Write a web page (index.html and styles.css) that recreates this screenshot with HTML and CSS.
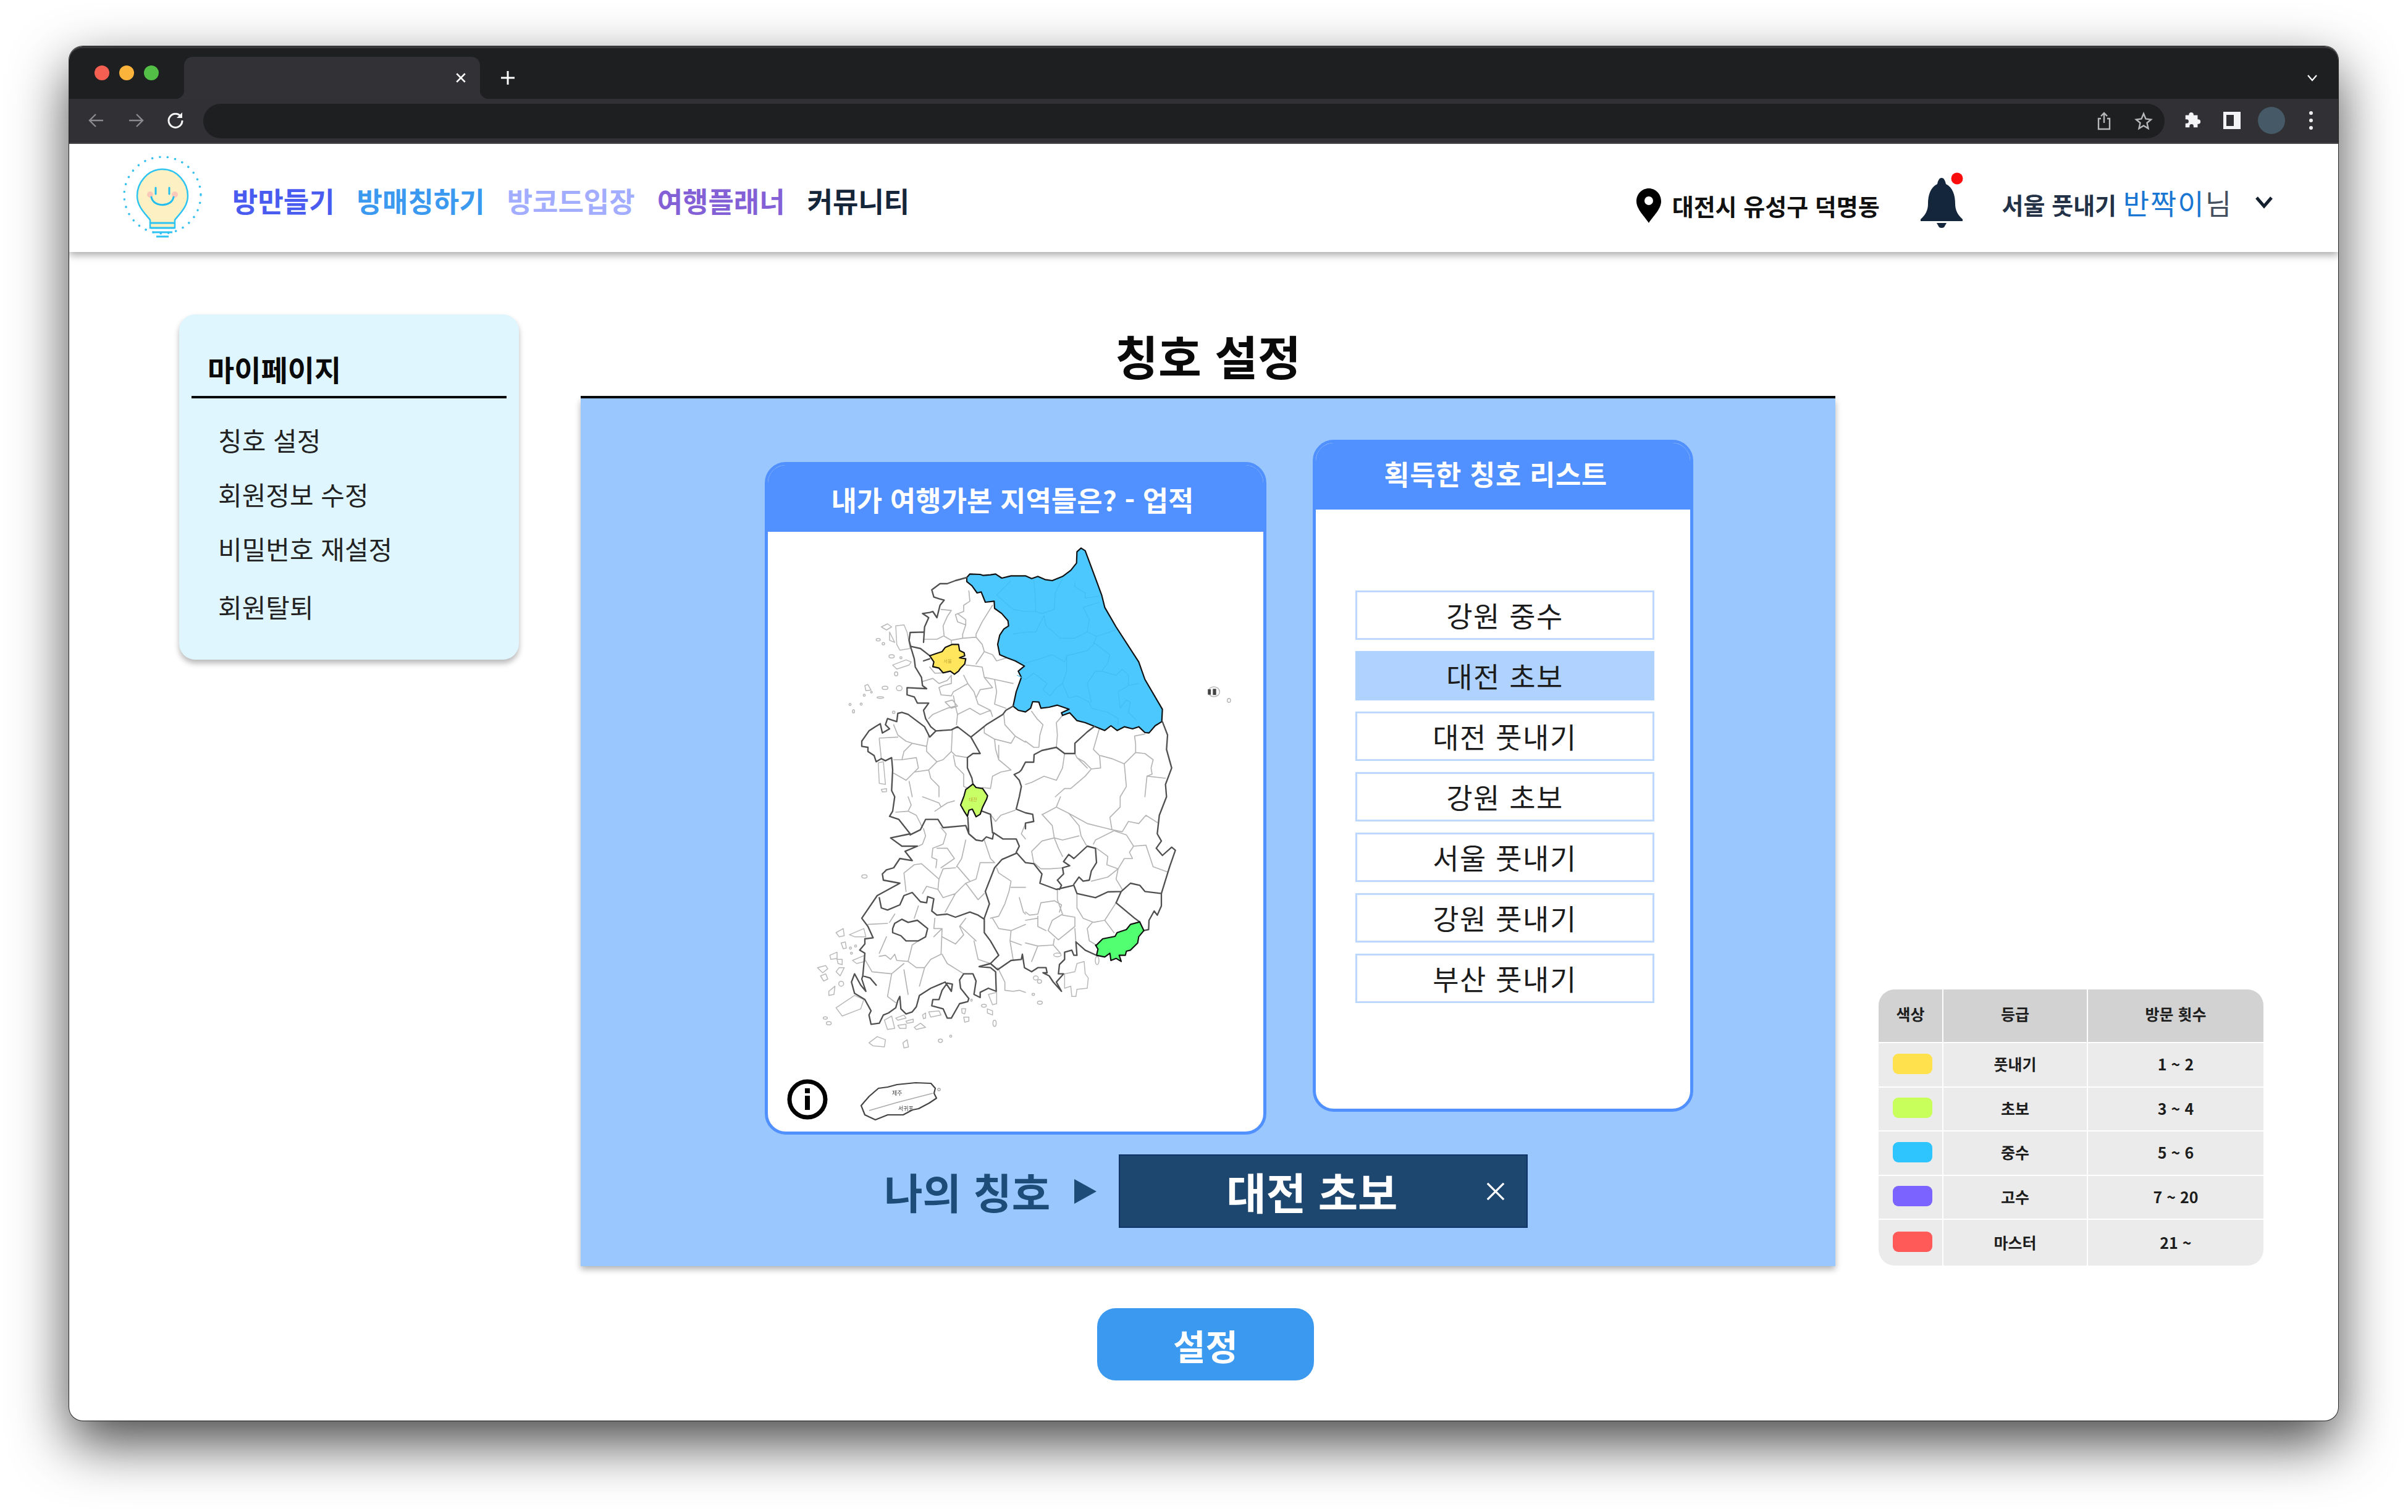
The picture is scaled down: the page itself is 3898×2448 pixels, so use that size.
FILE: index.html
```html
<!DOCTYPE html>
<html lang="ko">
<head>
<meta charset="utf-8">
<title>칭호 설정</title>
<link rel="stylesheet" href="styles.css">
</head>
<body>
<div class="window">
  <div class="tabstrip">
    <div class="lights"><span class="light red"></span><span class="light amber"></span><span class="light green"></span></div>
    <div class="tab">
      <svg class="tab-x" viewBox="0 0 16 16"><path d="M2 2L14 14M14 2L2 14"/></svg>
    </div>
    <svg class="tab-plus" viewBox="0 0 24 24"><path d="M12 1V23M1 12H23"/></svg>
    <svg class="tab-menu" viewBox="0 0 20 14"><path d="M3 3L10 11L17 3"/></svg>
  </div>
  <div class="toolbar">
    <svg class="tool dim" viewBox="0 0 30 30"><path d="M26 15H5M14 5L4 15L14 25"/></svg>
    <svg class="tool dim" viewBox="0 0 30 30"><path d="M4 15H25M16 5L26 15L16 25"/></svg>
    <svg class="tool bright" viewBox="0 0 30 30"><path d="M24 9A11 11 0 1 0 26 15"/><path class="solid" d="M26 2V11H17Z"/></svg>
    <div class="address">
      <svg class="tool grey" viewBox="0 0 30 30"><path d="M15 18V2M10 7L15 2L20 7M10 11H6V28H24V11H20"/></svg>
      <svg class="tool grey" viewBox="0 0 30 30"><path d="M15 3L18.5 11.5L27 12.5L20.5 18L22.5 27L15 22.5L7.5 27L9.5 18L3 12.5L11.5 11.5Z"/></svg>
    </div>
    <svg class="tool fill" viewBox="0 0 30 32"><path d="M3 7h6v-1a4 4 0 0 1 8 0v1h7v7h1a4 4 0 0 1 0 8h-1v6h-7v-2a3.5 3.5 0 0 0-7 0v2H3v-7h2a3.5 3.5 0 0 0 0-7H3z"/></svg>
    <svg class="tool fill" viewBox="0 0 30 30"><path d="M1 1H29V29H1ZM6 6V24H18V6Z" fill-rule="evenodd"/></svg>
    <span class="avatar"></span>
    <span class="kebab"><i></i><i></i><i></i></span>
  </div>
  <div class="page">
    <header class="topbar">
      <svg class="logo" viewBox="0 0 130 134">
        <circle class="logo-ring" cx="65" cy="65" r="62"/>
        <path class="logo-bulb" d="M65 23C41 23 24 45 24 66C24 84 38 96 45 105V118H85V105C92 96 106 84 106 66C106 45 89 23 65 23Z"/>
        <path class="logo-base" d="M45 110H85M46 118H84M49 125H81M55 132H75"/>
        <circle class="logo-cheek" cx="45" cy="64" r="5"/><circle class="logo-cheek" cx="85" cy="64" r="5"/>
        <path class="logo-line" d="M54 53V63M76 53V63M47 68C50 85 80 85 83 68"/>
      </svg>
      <nav class="mainnav">
        <a class="nav-a">방만들기</a>
        <a class="nav-b">방매칭하기</a>
        <a class="nav-c">방코드입장</a>
        <a class="nav-d">여행플래너</a>
        <a class="nav-e">커뮤니티</a>
      </nav>
      <div class="userbar">
        <svg class="pin" viewBox="0 0 40 56"><path fill-rule="evenodd" d="M20 0C9 0 0 9 0 21C0 34 14 46 20 56C26 46 40 34 40 21C40 9 31 0 20 0ZM20 13A7 7 0 1 1 20 27A7 7 0 1 1 20 13Z"/></svg>
        <span class="place">대전시 유성구 덕명동</span>
        <svg class="bell" viewBox="0 -12 72 94">
          <path d="M34 0C38 0 40 5 41 10C52 15 56 28 56 42C56 52 60 60 68 67V70H0V67C8 60 12 52 12 42C12 28 16 15 27 10C28 5 30 0 34 0Z"/>
          <path d="M26 73H42L38 80Q34 82 30 80Z"/>
          <circle class="bell-dot" cx="59" cy="1" r="9.5"/>
        </svg>
        <span class="greeting"><b>서울 풋내기</b> <em>반짝이</em><span>님</span></span>
        <svg class="user-chev" viewBox="0 0 30 22"><path d="M3 4L15 18L27 4"/></svg>
      </div>
    </header>
    <div class="content">
      <aside class="sidebar">
        <h2>마이페이지</h2>
        <ul>
          <li>칭호 설정</li>
          <li>회원정보 수정</li>
          <li>비밀번호 재설정</li>
          <li class="last">회원탈퇴</li>
        </ul>
      </aside>
      <main class="main">
        <h1>칭호 설정</h1>
        <section class="panel">
          <div class="cards">
            <article class="card card-map">
              <h3>내가 여행가본 지역들은? - 업적</h3>
              <div class="card-body map-body">
                <svg class="map" viewBox="0 0 2040 2460">
                  <g class="isl">
                    <path d="M320 405L350 390 370 405 345 420ZM390 400L430 395 445 430 460 510 410 518 395 490ZM360 430L385 480 360 470ZM375 590L440 565 465 575 455 590 395 610ZM240 690L255 685 270 712 245 715ZM305 1065L330 1060 340 1170 310 1165ZM320 1195L345 1190 345 1205 325 1207Z"/>
                    <ellipse cx="305" cy="467" rx="10" ry="6"/><ellipse cx="330" cy="487" rx="6" ry="6"/><ellipse cx="370" cy="548" rx="13" ry="8"/><ellipse cx="415" cy="555" rx="5" ry="5"/><ellipse cx="392" cy="633" rx="8" ry="10"/><ellipse cx="338" cy="701" rx="14" ry="8"/><ellipse cx="407" cy="703" rx="14" ry="12"/><ellipse cx="272" cy="722" rx="4" ry="4"/><ellipse cx="237" cy="737" rx="5" ry="5"/><ellipse cx="315" cy="748" rx="16" ry="4"/><ellipse cx="168" cy="782" rx="5" ry="5"/><ellipse cx="222" cy="780" rx="5" ry="5"/><ellipse cx="185" cy="815" rx="5" ry="8"/><ellipse cx="380" cy="820" rx="6" ry="6"/>
                    <ellipse cx="238" cy="1617" rx="13" ry="8"/>
                    <path d="M100 1890L135 1870 140 1905 115 1910ZM165 1900L200 1885 235 1870 245 1910 190 1910ZM125 1940L145 1935 150 1965 135 1968ZM180 2025L240 2000 240 2030 200 2040ZM70 2000L105 1985 105 2015 75 2020ZM105 2020L130 2020 130 2045 110 2040ZM115 2060L140 2060 120 2100 100 2080ZM10 2060L50 2050 60 2065 35 2085ZM25 2100L50 2090 60 2115 40 2125ZM65 2175L95 2150 90 2190 65 2195ZM100 2255L190 2195 235 2215 220 2260 130 2295ZM335 2315L370 2295 385 2355 350 2360ZM390 2305L430 2290 440 2305 400 2315ZM440 2320L475 2310 475 2325 445 2330ZM400 2340L440 2335 440 2355 410 2355ZM480 2350L510 2330 535 2350 490 2360ZM520 2290L535 2280 535 2305 525 2308ZM550 2275L600 2270 610 2290 560 2300ZM710 2260L730 2260 725 2285 712 2280ZM720 2300L745 2300 745 2320 725 2325ZM835 2260L860 2270 860 2290 835 2280ZM840 2190L880 2180 880 2235 860 2240ZM260 2425L300 2395 340 2410 335 2445 280 2440ZM425 2425L445 2410 452 2445 430 2450Z"/>
                    <ellipse cx="125" cy="2138" rx="12" ry="12"/><ellipse cx="48" cy="2305" rx="10" ry="6"/><ellipse cx="65" cy="2330" rx="12" ry="8"/><ellipse cx="870" cy="2330" rx="8" ry="15"/><ellipse cx="818" cy="2245" rx="12" ry="7"/><ellipse cx="758" cy="2218" rx="4" ry="5"/><ellipse cx="607" cy="2415" rx="10" ry="8"/><ellipse cx="657" cy="2393" rx="5" ry="5"/><ellipse cx="170" cy="1965" rx="5" ry="5"/><ellipse cx="195" cy="1955" rx="5" ry="5"/><ellipse cx="175" cy="1990" rx="5" ry="5"/>
                    <path d="M1210 2090L1260 2080 1270 2040 1305 2030 1310 2090 1325 2110 1320 2160 1270 2165 1265 2200 1245 2200 1240 2150 1210 2160Z"/>
                    <ellipse cx="1175" cy="1998" rx="18" ry="9"/><ellipse cx="1368" cy="2025" rx="9" ry="20"/><ellipse cx="1070" cy="2110" rx="12" ry="10"/><ellipse cx="1088" cy="2127" rx="10" ry="9"/><ellipse cx="1058" cy="2190" rx="6" ry="5"/><ellipse cx="1090" cy="2230" rx="12" ry="8"/>
                    <ellipse cx="1935" cy="720" rx="28" ry="24"/><ellipse cx="2008" cy="762" rx="8" ry="10"/>
                  </g>
                  <path class="dok" d="M1906 708H1920V734H1906ZM1930 706H1946V736H1930Z"/>
                  <path class="thin" d="M745 230L750 280 720 300 720 330 680 345 690 380 730 395 715 440 715 460M610 320L660 325 640 355 620 400 625 450 660 470 715 460 780 455 810 490 820 525 780 585M860 300L810 380 780 440 780 455M525 465L590 465 620 450M820 525L860 540 880 570 930 555M660 470L660 495M690 340L730 370 730 395M730 590L775 595 810 600 820 650 870 660 960 680M820 650L860 700 800 710 780 750 790 780 850 810 860 840M870 660L880 720 870 780 925 800M720 640L740 680 770 720 780 750M660 640L660 680 620 690 600 700 610 735 660 740 670 720 740 680M520 670L570 655 600 680 640 665 660 640M670 740L680 790 690 830 750 800 800 830 850 810M690 830L685 880M550 850L570 830 640 800 680 790M630 770L665 760 690 790 660 800ZM555 600L580 630 620 628M755 940L820 890 820 920 870 950 875 1000 890 1050 950 1100M870 950L950 970 970 935 1020 965M890 980L890 1050M915 830L920 880 970 935M310 950L320 1045M380 880L400 930 440 960 470 970 540 985 550 930M310 945L400 940M470 970L430 1010 420 1050 380 1050M540 985L540 1010 590 1060 620 1050 660 1010 665 905M660 1010L680 1030 740 1040M420 1050L490 1040 500 1090 480 1110M380 1115L440 1150 480 1110 550 1100 590 1060M550 1100L560 1140 600 1180 600 1230M670 1030L680 1080 720 1120 720 1180 745 1190M455 1155L470 1230M950 1100L900 1110 860 1130 850 1190 810 1185"/>
                  <path class="thin" d="M1050 815L1075 850 1105 880 1090 930 1085 990 1060 990 1020 960M1200 835L1170 870 1175 930 1170 990M1380 895L1350 1000 1380 1030 1385 1090 1340 1095 1305 1060 1270 1040 1260 1020M1385 1030L1440 1045 1500 1070 1555 1015 1600 1020 1640 1050 1630 1090 1635 1120 1610 1130 1700 1140M1500 1070L1510 1180 1480 1230M1555 1015L1555 975 1550 935 1600 925M1340 1095L1310 1130 1240 1190 1210 1190 1165 1230M1210 1020L1200 1090 1170 1150 1110 1130 1050 1160 1020 1170M1270 1040L1320 1090M1610 1130L1600 1230"/>
                  <path class="thin" d="M390 1305L450 1300 490 1320 520 1380M450 1230L465 1270 450 1300M525 1385L535 1420 520 1460 500 1470M580 1300L640 1260 675 1250M520 1230L600 1260 610 1280M610 1380L635 1410 620 1460 570 1480 565 1525 590 1535 585 1575M590 1480L640 1480 675 1530 610 1575M730 1440L710 1530 685 1570M820 1440L850 1530 870 1550 800 1550 780 1630 730 1650M690 1570L750 1640M600 1630L620 1580 680 1575M480 1560L515 1555 600 1630 595 1680 620 1720 680 1700 730 1650 790 1730 820 1700M430 1600L480 1560M430 1600L440 1690M520 1700L540 1665 595 1680M680 1700L630 1790M255 1850L350 1845M360 1840L385 1800M480 1820L500 1760M345 1910L310 1990M310 2005L340 2000 365 2020 385 1995 395 2025 450 2030 470 1950 500 1930M450 2030L490 2060 530 2060 560 2020 610 1995 615 1870 575 1910M580 1820L575 1870 610 1870M615 1910L680 1945 720 1900 700 1860 730 1820M705 1860L780 1930M615 1995L640 2040 720 2090M530 2060L505 2150M430 2040L370 2090 350 2200 390 2230M430 2070L450 2190M240 2020L275 2080 370 2090M770 1930L790 2020 850 2040M885 2060L920 2130 920 2170 960 2175 990 2170 1020 2180M880 1575L890 1600 950 1640 940 1690 920 1750 890 1810 850 1820M1020 1670L950 1670M990 1720L1010 1790 1020 1800M860 1820L890 1870 950 1880 1020 1850M950 1880L945 1930 1000 1950M945 1930L960 2020M850 1315L875 1350 900 1320 970 1295M1020 1360L1000 1410 1020 1435"/>
                  <path class="thin" d="M1100 1315L1150 1370 1160 1430 1100 1445 1050 1495 1060 1550 1095 1580 1140 1580 1205 1575M1160 1430L1180 1480 1200 1520M1105 1315L1170 1280 1190 1230M1170 1280L1230 1310 1280 1370 1290 1420 1315 1465M1230 1310L1320 1360 1400 1380 1440 1390 1430 1330 1480 1280 1480 1230M1160 1430L1200 1440 1280 1420M1350 1460L1360 1440 1450 1395 1510 1415 1545 1470 1525 1500 1540 1530 1500 1530 1470 1580M1440 1390L1490 1400 1520 1350 1570 1360 1605 1320 1660 1355M1365 1480L1420 1520 1415 1560 1470 1580 1420 1620 1340 1640M1545 1470L1605 1465 1640 1570 1710 1595M1470 1580L1460 1630 1490 1680M1175 1680L1175 1730 1200 1800 1150 1830 1130 1880 1180 1925 1260 1860 1260 1815 1200 1805M1270 1700L1270 1770 1300 1820 1350 1840 1405 1830 1460 1745M1405 1830L1450 1890M1345 1840L1320 1870 1330 1930 1355 1945M1095 1745L1160 1735 1195 1755 1185 1790M1095 1745L1080 1800 1040 1805 1020 1790M1080 1810L1080 1860 1120 1880M1020 1830L1080 1820M1160 1920L1155 1950 1080 1955 1050 2030M1020 1940L1080 1955M1155 1950L1190 1990M1265 1935L1260 1870"/>
                  <path class="blue-fill" d="M735 165L750 148 800 150 815 155 850 152 875 148 905 168 950 157 1020 157 1050 170 1080 160 1115 175 1150 180 1200 160 1240 130 1268 95 1270 40 1290 22 1310 35 1340 115 1390 250 1405 310 1460 405 1570 575 1600 660 1685 805 1682 865 1650 885 1620 920 1600 918 1570 890 1540 900 1500 890 1465 908 1435 885 1405 908 1355 888 1310 870 1270 860 1235 822 1200 835 1195 822 1232 805 1175 785 1135 795 1095 800 1085 770 1055 768 1045 800 1020 818 985 810 960 790 975 720 1000 650 985 620 1015 595 970 570 930 555 895 540 885 490 895 445 915 415 938 400 935 375 905 340 870 315 868 280 825 285 805 235 785 240 760 205 735 185Z"/>
                  <path class="blue-line" d="M1060 175L1068 260 1070 330 1100 340 1160 320 1165 240 1200 170M950 180L880 250 925 290 960 320 1020 330 1070 330M1110 350L1120 400 1190 460 1260 460 1320 430 1330 370 1300 310 1380 285M1320 430L1365 450 1460 420M1365 450L1350 490 1320 520 1220 545 1210 575 1150 540 1090 560 1020 580 960 560M1220 545L1220 620 1200 680 1230 750 1270 740 1330 770 1340 800 1420 820 1470 850 1470 880M1350 480L1430 540 1420 580 1390 620 1360 620 1320 680 1340 770M1390 620L1460 640 1490 610 1520 640 1520 690 1570 680M1520 690L1470 720 1480 800 1510 760 1530 770 1520 820 1560 860M1200 680L1170 700 1140 740 1105 710 1125 680 1060 630 1020 660 980 640M1110 350L1070 430 1020 430 960 440M1260 190L1260 210 1310 240 1310 265 1380 255"/>
                  <path class="thick" d="M735 165L680 180 640 195 605 195 565 225 575 260 600 268 625 275 605 300 590 360 570 330 555 335 520 340 550 360 530 405 525 480M525 430L460 432 455 470 465 510 480 560 485 600 515 650 520 690 540 705 445 700 445 735 480 745 495 775 550 775 525 810 535 850 560 890 585 910 555 940 530 890 450 830 420 820 400 825 395 865 350 850 340 880 360 900 325 920 315 875 290 890 260 910 225 960 225 985 255 990 255 1010 285 1030 295 1060 320 1045 340 1055 370 1040 375 1100 370 1200 385 1230 375 1300 360 1325 405 1340 460 1410 365 1430 420 1470 495 1470 435 1495 470 1540 410 1530 380 1575 345 1585 325 1605 330 1635 410 1650 300 1710 225 1820 255 1860 280 1915 240 1920 240 1945 215 1975 240 1990 230 2100 265 2110 295 2145 265 2110 230 2100 225 2115 245 2175 220 2145 190 2090 175 2130 190 2185 240 2215 270 2270 260 2290 270 2335 310 2330 330 2290 355 2280 390 2255 400 2220 410 2200 415 2260 440 2285 470 2275 490 2250 505 2195 560 2160 630 2130 660 2175 665 2140 640 2135 615 2170 600 2215 570 2215 565 2245 620 2260 640 2305 660 2305 700 2235 740 2225 745 2210 705 2160 700 2120 720 2090 765 2090 780 2125 770 2190 800 2205 800 2180 840 2160 878 2175 875 2080 850 2060 795 2055 850 2040 885 2070 950 2025 1000 2020 1005 1995 1015 2060 1050 2080 1080 2060 1120 2060 1125 2085 1105 2085 1135 2100 1155 2130 1195 2175 1170 2130 1205 2090 1180 2090 1185 2045 1210 2020 1210 1985 1245 1975 1255 2000 1270 2000 1265 1935 1310 1975 1360 1998"/>
                  <path class="thick" d="M465 500L510 510 555 545M525 570L555 560M585 910L660 905 690 890 755 940 800 1020 765 1020 738 1040 738 1090 760 1140 765 1170M755 940L830 880 910 830 925 810 960 790M965 1122L990 1110 1000 1100 1020 1062 1060 1062 1062 1025 1100 1005 1170 990 1210 1020 1260 1020 1260 970 1320 915 1355 888M965 1122L990 1150 1000 1180 990 1230 975 1290 1020 1308 1055 1315 1060 1350 1020 1358 1020 1385M740 1330L745 1410 780 1440 810 1445 830 1425 860 1435 865 1405 910 1435 975 1435 990 1470 975 1500 1020 1550 1060 1555 1100 1605 1090 1650 1170 1680 1255 1660 1270 1700 1360 1720 1420 1692 1485 1690 1460 1745 1550 1820 1575 1838M810 1300L850 1315 860 1405M975 1505L905 1535 870 1575 825 1690 845 1750 820 1820 820 1890 850 1930 890 2000 850 2040M460 1415L510 1390 535 1340 595 1340 620 1380 730 1370 745 1410M310 1720L320 1770 350 1780 410 1755 430 1710 470 1695 510 1740 540 1745 545 1715 575 1725 565 1785 590 1805 640 1800 680 1815 750 1790 790 1805 820 1825M375 1870L385 1845 420 1825 450 1840 495 1830 545 1870 535 1910 500 1930 440 1930 415 1905 375 1890ZM1175 1635L1205 1605 1200 1575 1235 1565 1205 1545 1230 1510 1255 1530 1320 1470 1360 1480 1365 1550 1340 1590 1330 1635 1300 1640 1280 1620 1255 1655M1175 1635L1195 1660 1185 1680M1485 1690L1530 1650 1575 1660 1600 1690 1680 1700 1680 1760 1660 1805 1645 1785 1620 1830 1618 1875 1595 1880"/>
                  <path class="thick" d="M1685 865L1710 930 1705 1000 1730 1090 1700 1170 1705 1230 1670 1320 1660 1410 1680 1445 1655 1480 1685 1515 1730 1475 1748 1490 1720 1570 1680 1700"/>
                  <path class="yellow" d="M555 545L585 535 615 525 630 505 665 490 695 490 700 520 722 530 725 545 700 555 730 560 725 585 705 605 695 620 675 635 655 620 620 628 600 605 570 598 575 575Z"/>
                  <path class="lime" d="M765 1168L780 1185 812 1190 836 1225 832 1240 812 1280 800 1315 780 1327 762 1290 746 1295 738 1325 722 1300 705 1270 722 1225 730 1195Z"/>
                  <path class="mint" d="M1365 1950L1395 1920 1455 1908 1465 1890 1510 1875 1530 1850 1575 1838 1595 1880 1570 1910 1565 1940 1530 1975 1510 1980 1505 2000 1475 2000 1485 2030 1460 2015 1435 2025 1430 1990 1405 2008 1365 2000 1372 1970 1360 1950Z"/>
                  <text class="map-label" x="622" y="580">서울</text>
                  <text class="map-label" x="745" y="1250">대전</text>
                </svg>
                <div class="map-foot">
                  <svg class="info" viewBox="0 0 66 66"><circle cx="33" cy="33" r="29"/><rect x="29" y="27" width="8" height="23"/><rect x="29" y="15" width="8" height="8"/></svg>
                  <svg class="jeju" viewBox="0 0 134 66">
                    <path class="jeju-land" d="M2 40L8 33 15 25 30 12 45 10 60 6 90 3 115 4 122 12 120 20 124 28 112 36 95 45 85 47 70 55 45 55 25 63 8 55Z"/>
                    <path class="jeju-line" d="M15 48L60 35 118 20"/>
                    <circle class="jeju-line" cx="128" cy="14" r="2"/>
                    <text x="52" y="23">제주</text>
                    <text x="62" y="48">서귀포</text>
                  </svg>
                </div>
              </div>
            </article>
            <article class="card card-list">
              <h3>획득한 칭호 리스트</h3>
              <div class="card-body list-body">
                <div class="badge">강원 중수</div>
                <div class="badge selected">대전 초보</div>
                <div class="badge">대전 풋내기</div>
                <div class="badge">강원 초보</div>
                <div class="badge">서울 풋내기</div>
                <div class="badge">강원 풋내기</div>
                <div class="badge">부산 풋내기</div>
              </div>
            </article>
          </div>
          <div class="chosen">
            <span class="chosen-label">나의 칭호</span>
            <span class="chosen-arrow"></span>
            <div class="chosen-box">
              <span>대전 초보</span>
              <svg class="chosen-x" viewBox="0 0 34 34"><path d="M3 3L31 31M31 3L3 31"/></svg>
            </div>
          </div>
        </section>
        <button class="save">설정</button>
      </main>
      <aside class="legend-wrap">
        <table class="legend">
          <thead>
            <tr><th class="c1">색상</th><th class="c2">등급</th><th class="c3">방문 횟수</th></tr>
          </thead>
          <tbody>
            <tr><td><span class="swatch s-yellow"></span></td><td>풋내기</td><td>1 ~ 2</td></tr>
            <tr><td><span class="swatch s-lime"></span></td><td>초보</td><td>3 ~ 4</td></tr>
            <tr><td><span class="swatch s-sky"></span></td><td>중수</td><td>5 ~ 6</td></tr>
            <tr><td><span class="swatch s-violet"></span></td><td>고수</td><td>7 ~ 20</td></tr>
            <tr class="final"><td><span class="swatch s-red"></span></td><td>마스터</td><td>21 ~</td></tr>
          </tbody>
        </table>
      </aside>
    </div>
  </div>
</div>
</body>
</html>
```
FILE: styles.css
```css
* { box-sizing: border-box; }
html, body { margin: 0; height: 2448px; background: #fff; overflow: hidden; }
body {
  padding: 75px 0 0 112px;
  font-family: "Noto Sans CJK KR", "Noto Sans", sans-serif;
  color: #1a1a1a;
}
.window {
  width: 3673px;
  height: 2225px;
  display: flex;
  flex-direction: column;
  border-radius: 22px;
  background: #fff;
  box-shadow: 0 36px 90px rgba(0, 0, 0, .72), 0 0 0 1px #3a3a3a;
}

/* browser chrome */
.tabstrip {
  height: 85px;
  flex: none;
  display: flex;
  align-items: center;
  background: #1e1f21;
  border-radius: 22px 22px 0 0;
  padding: 0 32px 0 41px;
  border-top: 3px solid #38383b;
}
.lights { display: flex; gap: 16px; margin-top: -2px; }
.light { width: 24px; height: 24px; border-radius: 50%; }
.red { background: #f45f52; }
.amber { background: #fbb33c; }
.green { background: #54bf47; }
.tab {
  align-self: flex-end;
  width: 479px;
  height: 68px;
  margin-left: 41px;
  background: #313136;
  border-radius: 14px 14px 0 0;
  position: relative;
}
.tab::before, .tab::after {
  content: "";
  position: absolute;
  bottom: 0;
  width: 14px;
  height: 14px;
}
.tab::before { left: -14px; background: radial-gradient(circle at 0 0, transparent 14px, #313136 14.5px); }
.tab::after { right: -14px; background: radial-gradient(circle at 100% 0, transparent 14px, #313136 14.5px); }
.tab-x { position: absolute; left: 439px; top: 25px; width: 18px; height: 18px; }
.tab-x path, .tab-plus path, .tab-menu path { fill: none; stroke: #fff; stroke-width: 2.2; }
.tab-plus { width: 24px; height: 24px; margin-left: 33px; margin-top: 14px; }
.tab-plus path { stroke-width: 3; }
.tab-menu { width: 20px; height: 14px; margin-left: auto; margin-top: 14px; }
.toolbar {
  height: 73px;
  flex: none;
  display: flex;
  align-items: center;
  gap: 26px;
  padding: 0 25px 2px 25px;
  background: #303035;
  border-bottom: 2px solid #47474c;
}
.tool { width: 38px; height: 30px; flex: none; }
.tool path { fill: none; stroke-width: 2.4; }
.tool.dim path { stroke: #8b8b8e; }
.tool.grey path { stroke: #b8b8ba; }
.tool.bright path { stroke: #f4f4f4; stroke-width: 3; }
.tool.bright .solid { fill: #f4f4f4; stroke: none; }
.tool.fill path { fill: #f4f4f6; stroke: none; }
.address {
  flex: 1;
  height: 56px;
  display: flex;
  align-items: center;
  justify-content: flex-end;
  gap: 26px;
  padding-right: 15px;
  margin-top: 2px;
  background: #1e1f21;
  border-radius: 28px;
}
.avatar { width: 44px; height: 44px; flex: none; border-radius: 50%; background: #455a66; margin: 0 -3px; }
.kebab { width: 38px; flex: none; display: flex; flex-direction: column; align-items: center; gap: 6px; }
.kebab i { width: 6px; height: 6px; border-radius: 50%; background: #eee; }

/* page */
.page { flex: 1; display: flex; flex-direction: column; min-height: 0; border-radius: 0 0 22px 22px; overflow: hidden; }
.topbar {
  height: 175px;
  flex: none;
  display: flex;
  align-items: center;
  padding: 0 105px 0 86px;
  background: #fff;
  box-shadow: 0 5px 12px rgba(0, 0, 0, .34);
  position: relative;
}
.logo { width: 130px; height: 134px; flex: none; margin-top: -6px; }
.logo-ring { fill: none; stroke: #35c1f2; stroke-width: 3.5; stroke-linecap: round; stroke-dasharray: 0.1 12.4; }
.logo-bulb { fill: #fdf0c2; stroke: #2ec4f1; stroke-width: 2.5; }
.logo-base { fill: none; stroke: #2ec4f1; stroke-width: 3; }
.logo-cheek { fill: #fbc9bb; }
.logo-line { fill: none; stroke: #23bdf0; stroke-width: 3; stroke-linecap: round; }
.mainnav { display: flex; gap: 36px; margin-left: 48px; margin-top: 8px; font-size: 45px; font-weight: 700; line-height: 60px; white-space: nowrap; }
.nav-a { color: #4a5cf0; }
.nav-b { color: #3b99f0; }
.nav-c { color: #a3adff; }
.nav-d { color: #8460d6; }
.nav-e { color: #15263a; }
.userbar { display: flex; align-items: center; margin-left: auto; white-space: nowrap; }
.pin { width: 40px; height: 56px; margin-top: 25px; }
.place { margin-left: 18px; font-size: 38px; font-weight: 700; color: #111; line-height: 50px; margin-top: 24px; }
.bell { width: 72px; height: 94px; margin-left: 66px; margin-top: 5px; fill: #14263c; }
.bell-dot { fill: #fb0d0d; }
.greeting { margin-left: 60px; font-size: 38px; line-height: 60px; margin-top: 16px; color: #233247; }
.greeting b { font-weight: 700; }
.greeting em { font-style: normal; font-size: 46px; color: #1976d2; letter-spacing: 2px; }
.greeting span { font-size: 46px; color: #44505f; letter-spacing: 2px; }
.user-chev { width: 30px; height: 22px; margin-left: 36px; margin-top: 12px; }
.user-chev path { fill: none; stroke: #14202e; stroke-width: 5; }

.content { flex: 1; display: flex; padding-left: 178px; min-height: 0; }
.sidebar {
  width: 550px;
  height: 559px;
  margin-top: 101px;
  flex: none;
  padding: 0 20px;
  background: #e0f6ff;
  border-radius: 26px;
  box-shadow: 0 6px 10px rgba(0, 0, 0, .28);
}
.sidebar h2 {
  margin: 0;
  padding: 58px 0 14px 26px;
  font-size: 47px;
  line-height: 60px;
  font-weight: 700;
  color: #0a0a0a;
  border-bottom: 4px solid #0a0a0a;
}
.sidebar ul { list-style: none; margin: 37px 0 0; padding: 0 0 0 43px; display: flex; flex-direction: column; gap: 28px; }
.sidebar li { font-size: 42px; line-height: 60px; color: #222; }
.sidebar li.last { margin-top: 6px; }

.main { width: 2031px; margin-left: 100px; flex: none; display: flex; flex-direction: column; align-items: center; padding-top: 119px; }
.main h1 {
  align-self: stretch;
  margin: 0;
  height: 118px;
  text-align: center;
  font-size: 76px;
  line-height: 96px;
  font-weight: 700;
  color: #0a0a0a;
  border-bottom: 4px solid #0a0a0a;
}
.panel {
  align-self: stretch;
  height: 1405px;
  flex: none;
  background: #9bc7ff;
  box-shadow: 0 5px 10px rgba(0, 0, 0, .3);
  display: flex;
  flex-direction: column;
}
.cards { display: flex; align-items: flex-start; gap: 75px; padding: 67px 0 0 298px; height: 1192px; flex: none; }
.card {
  border: 5px solid #5090ff;
  border-radius: 34px;
  background: #fff;
  overflow: hidden;
  display: flex;
  flex-direction: column;
}
.card h3 {
  margin: 0;
  background: #5090ff;
  color: #fff;
  text-align: center;
  font-weight: 700;
  font-size: 45px;
  flex: none;
}
.card-map { width: 812px; height: 1089px; margin-top: 36px; }
.card-map h3 { height: 108px; line-height: 112px; padding-right: 10px; }
.card-list { width: 616px; height: 1088px; }
.card-list h3 { height: 108px; line-height: 100px; letter-spacing: .5px; padding-right: 24px; }
.map-body { padding: 19px 0 0 31px; }
.map { display: block; width: 680px; height: 820px; margin-left: 46px; filter: blur(.5px); }
.map path, .map ellipse { stroke-linejoin: round; stroke-linecap: round; fill: none; }
.map .isl path, .map .isl ellipse { stroke: #b8b8b8; stroke-width: 4.5; fill: #fff; }
.map .thin { stroke: #b4b4b4; stroke-width: 5; }
.map .thick { stroke: #505050; stroke-width: 7; }
.map .dok { fill: #444; }
.map .blue-fill { fill: #4dc8ff; stroke: #111; stroke-width: 6.5; }
.map .blue-line { stroke: #42bdf3; stroke-width: 3.5; }
.map .yellow { fill: #ffe65c; stroke: #111; stroke-width: 6.5; }
.map .lime { fill: #c8ff66; stroke: #111; stroke-width: 6.5; }
.map .mint { fill: #52ff70; stroke: #111; stroke-width: 6.5; }
.map-label { font-size: 22px; fill: #bda63a; }
.map-foot { display: flex; align-items: flex-start; gap: 52px; margin-top: 47px; }
.info { width: 66px; height: 66px; flex: none; }
.info circle { fill: #fff; stroke: #000; stroke-width: 7; }
.info rect { fill: #000; }
.jeju { width: 134px; height: 66px; flex: none; margin-top: 3px; filter: blur(.4px); }
.jeju-land { fill: #fff; stroke: #444; stroke-width: 2.2; stroke-linejoin: round; }
.jeju-line { fill: none; stroke: #aaa; stroke-width: 1.5; }
.jeju text { font-size: 9px; fill: #444; }
.list-body { padding: 131px 0 0 64px; display: flex; flex-direction: column; gap: 18px; }
.badge {
  width: 484px;
  height: 80px;
  display: flex;
  align-items: center;
  justify-content: center;
  border: 3px solid #bcd8ff;
  background: #fff;
  padding-bottom: 3px;
  font-size: 46px;
  letter-spacing: 1.5px;
  color: #1c1c1c;
}
.badge.selected { background: #b0d2ff; border-color: #b0d2ff; }
.chosen { display: flex; align-items: center; margin: 32px 0 0 491px; }
.chosen-label { font-size: 68px; font-weight: 700; line-height: 90px; color: #1e4c78; white-space: nowrap; }
.chosen-arrow {
  width: 0;
  height: 0;
  margin-left: 39px;
  border-left: 36px solid #1e4c78;
  border-top: 20px solid transparent;
  border-bottom: 20px solid transparent;
}
.chosen-box {
  width: 662px;
  height: 119px;
  margin-left: 36px;
  display: flex;
  align-items: center;
  padding-left: 172px;
  background: #1e4770;
  border: 2px solid #0f3468;
  color: #fff;
  font-size: 70px;
  font-weight: 700;
  white-space: nowrap;
}
.chosen-x { width: 32px; height: 32px; margin-left: 143px; }
.chosen-x path { fill: none; stroke: #fff; stroke-width: 3.5; }
.save {
  width: 351px;
  height: 117px;
  margin: 68px 8px 0 0;
  border: 0;
  border-radius: 30px;
  background: #3b99f0;
  color: #fff;
  font-family: inherit;
  font-size: 57px;
  font-weight: 700;
  padding: 0;
}
.legend-wrap { margin-left: 70px; padding-top: 1194px; flex: none; }
.legend {
  width: 623px;
  border-collapse: separate;
  border-spacing: 0;
  border-radius: 26px;
  overflow: hidden;
  table-layout: fixed;
  background: #ebebeb;
  font-size: 25px;
  font-weight: 700;
  color: #1d1d1d;
  text-align: center;
}
.legend th { background: #d2d2d2; height: 87px; padding: 0 0 8px; font-weight: 700; }
.legend td { height: 71.5px; padding: 0 0 3px; }
.legend .final td { height: 74px; }
.legend th, .legend td { border-right: 2px solid #fff; border-bottom: 2px solid #fff; }
.legend th:last-child, .legend td:last-child { border-right: 0; }
.legend .final td { border-bottom: 0; }
.c1 { width: 105px; }
.c2 { width: 234px; }
.swatch { display: block; width: 64px; height: 33px; margin: 0 0 0 23px; border-radius: 9px; }
.s-yellow { background: #ffe14d; }
.s-lime { background: #c8ff5a; }
.s-sky { background: #2ec5ff; }
.s-violet { background: #7a63ff; }
.s-red { background: #ff5a58; }
```
